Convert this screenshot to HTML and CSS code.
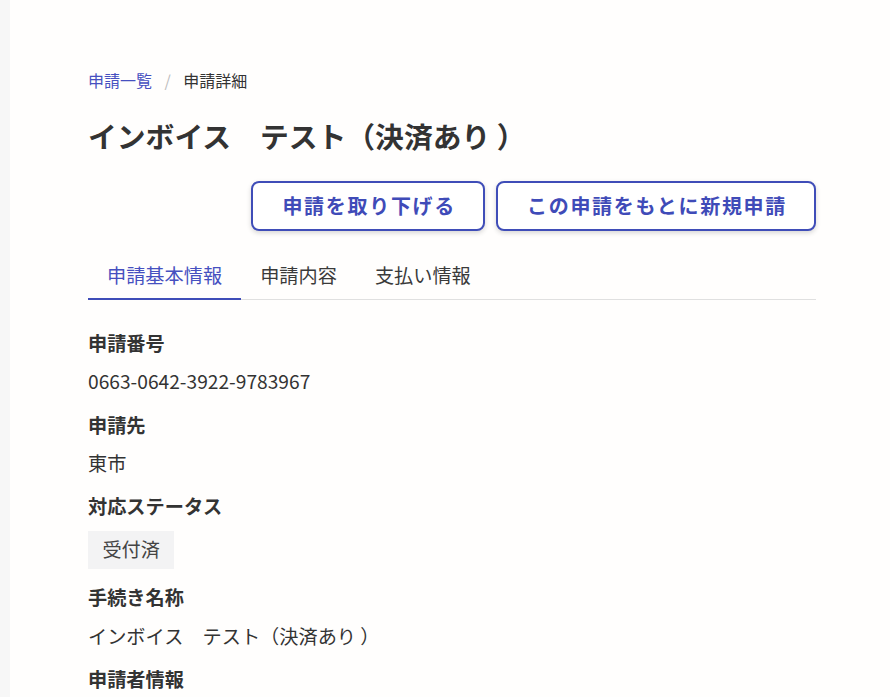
FILE: index.html
```html
<!DOCTYPE html>
<html lang="ja">
<head>
<meta charset="utf-8">
<title>申請詳細</title>
<link rel="stylesheet" href="styles.css">
</head>
<body>
<div class="layout">
  <aside class="rail"></aside>
  <main class="main">
    <div class="content">
      <nav class="breadcrumb">
        <a class="crumb-link" href="#">申請一覧</a>
        <span class="crumb-sep">/</span>
        <span class="crumb-current">申請詳細</span>
      </nav>
      <h1 class="title">インボイス　テスト（決済あり ）</h1>
      <div class="actions">
        <button class="btn" type="button">申請を取り下げる</button>
        <button class="btn" type="button">この申請をもとに新規申請</button>
      </div>
      <div class="tabs">
        <div class="tab tab-active">申請基本情報</div>
        <div class="tab">申請内容</div>
        <div class="tab">支払い情報</div>
      </div>
      <dl class="details">
        <dt class="label">申請番号</dt>
        <dd class="value">0663-0642-3922-9783967</dd>
        <dt class="label">申請先</dt>
        <dd class="value">東市</dd>
        <dt class="label">対応ステータス</dt>
        <dd class="value"><span class="badge">受付済</span></dd>
        <dt class="label">手続き名称</dt>
        <dd class="value">インボイス　テスト（決済あり ）</dd>
        <dt class="label">申請者情報</dt>
      </dl>
    </div>
  </main>
</div>
</body>
</html>
```
FILE: styles.css
```css
* { box-sizing: border-box; }
html, body {
  margin: 0;
  padding: 0;
  height: 100%;
}
body {
  font-family: "Noto Sans CJK JP", "Noto Sans", sans-serif;
  color: #333333;
  background: #fffefd;
  overflow: hidden;
}
.layout {
  display: flex;
  min-height: 100%;
}
.rail {
  width: 10px;
  flex: 0 0 10px;
  background: #f7f7f7;
}
.main {
  flex: 1;
  padding-left: 78px;
}
.content {
  width: 728px;
  padding-top: 68px;
}
.breadcrumb {
  display: flex;
  align-items: center;
  font-size: 16px;
  line-height: 24px;
}
.crumb-link {
  color: #4650c0;
  text-decoration: none;
}
.crumb-sep {
  color: #bdbdbd;
  margin: 0 12.5px;
}
.crumb-current {
  color: #333333;
}
.title {
  margin: 22px 0 0;
  font-size: 28.8px;
  line-height: 43px;
  font-weight: 700;
  color: #333333;
}
.actions {
  display: flex;
  justify-content: flex-end;
  gap: 11px;
  margin-top: 24px;
}
.btn {
  font-family: inherit;
  font-size: 20px;
  font-weight: 700;
  letter-spacing: 1.7px;
  line-height: 46px;
  height: 50px;
  padding: 0 27px 0 29px;
  color: #3f4bb8;
  background: #ffffff;
  border: 2px solid #3f4db8;
  border-radius: 8px;
  box-shadow: 0 2px 5px rgba(0, 0, 0, 0.16);
  cursor: pointer;
}
.tabs {
  display: flex;
  margin-top: 20px;
  border-bottom: 1px solid #e0e0e0;
}
.tab {
  font-size: 19.2px;
  line-height: 28px;
  padding: 10px 19px 9px;
  color: #3a3a3a;
}
.tab-active {
  color: #4650c0;
  border-bottom: 2px solid #3f4db8;
  margin-bottom: -1px;
}
.details {
  margin: 29px 0 0;
  font-size: 19.2px;
  line-height: 28.8px;
}
.label {
  font-weight: 700;
  margin: 0 0 9.6px;
}
.value {
  margin: 0 0 14.4px;
}
.badge {
  display: inline-block;
  background: #f3f3f4;
  color: #444444;
  padding: 4.8px 14.4px;
  line-height: 28.8px;
}
```
